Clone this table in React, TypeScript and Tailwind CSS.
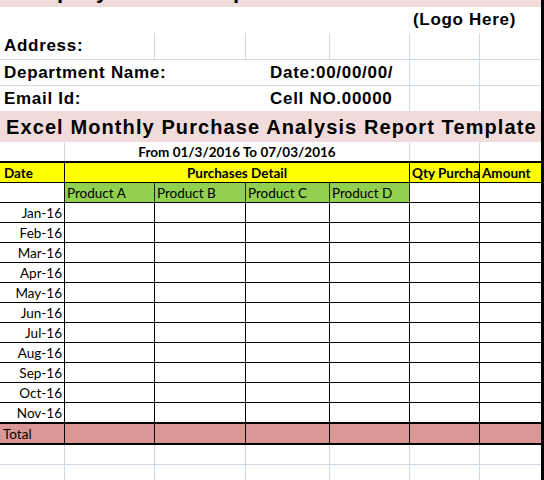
const months = ["Jan-16", "Feb-16", "Mar-16", "Apr-16", "May-16", "Jun-16", "Jul-16", "Aug-16", "Sep-16", "Oct-16", "Nov-16"];

// column widths incl. right gridline
const cols = ["w-[65px]", "w-[90px]", "w-[91px]", "w-[84px]", "w-[80px]", "w-[70px]", "w-[61px]"];

const arial = { fontFamily: '"Liberation Sans", Arial, sans-serif' };
const calibri = { fontFamily: 'Lato, "Noto Sans", sans-serif' };

interface IRowProps {
    cls: string;
    line: string;
    first?: React.ReactNode;
}

const PlainRow: React.FunctionComponent<IRowProps> = ({ cls, line, first }): JSX.Element => (
    <div className={`flex ${cls}`}>
        {cols.map((c, i) => (
            <div
                key={c}
                className={`${c} h-full flex items-center pt-[1px] ${i < cols.length - 1 ? `border-r ${line}` : ""} ${i === 0 ? "justify-end pr-[2px]" : ""}`}
            >
                {i === 0 ? first : null}
            </div>
        ))}
    </div>
);

const App: React.FunctionComponent = (): JSX.Element => {
    return (
        <div className="w-[544px] h-[480px] overflow-hidden bg-white flex text-black">
            <div className="w-[541px] flex flex-col">
                {/* company name row, scrolled mostly out of view */}
                <div className="h-[7px] shrink-0 bg-[#f2dcdb] overflow-hidden">
                    <div
                        className="mt-[-22px] pl-[8px] text-[22px] leading-[26px] font-bold whitespace-nowrap"
                        style={arial}
                    >
                        Company Name Group
                    </div>
                </div>

                <div className="h-[26px] shrink-0 flex items-center" style={arial}>
                    <div className="w-[410px]" />
                    <div className="pl-[3px] text-[17px] font-bold tracking-[0.7px] whitespace-nowrap">(Logo Here)</div>
                </div>

                <div className="h-[27px] shrink-0 flex border-b border-[#d0d7e5]" style={arial}>
                    <div className="w-[155px] border-r border-[#d0d7e5] flex items-center pl-[4px] text-[17px] font-bold tracking-[0.7px]">
                        Address:
                    </div>
                    <div className="w-[91px] border-r border-[#d0d7e5]" />
                    <div className="w-[84px] border-r border-[#d0d7e5]" />
                    <div className="w-[80px] border-r border-[#d0d7e5]" />
                    <div className="w-[70px] border-r border-[#d0d7e5]" />
                    <div className="w-[61px]" />
                </div>

                <div className="h-[26px] shrink-0 flex border-b border-[#d0d7e5]" style={arial}>
                    <div className="w-[410px] border-r border-[#d0d7e5] flex items-center text-[17px] font-bold tracking-[0.7px] whitespace-nowrap">
                        <span className="w-[270px] pl-[4px]">Department Name:</span>
                        <span>Date:00/00/00/</span>
                    </div>
                    <div className="w-[70px] border-r border-[#d0d7e5]" />
                    <div className="w-[61px]" />
                </div>

                <div className="h-[25px] shrink-0 flex" style={arial}>
                    <div className="w-[410px] border-r border-[#d0d7e5] flex items-center text-[17px] font-bold tracking-[0.7px] whitespace-nowrap">
                        <span className="w-[270px] pl-[4px]">Email Id:</span>
                        <span>Cell NO.00000</span>
                    </div>
                    <div className="w-[70px] border-r border-[#d0d7e5]" />
                    <div className="w-[61px]" />
                </div>

                <div
                    className="h-[31px] shrink-0 bg-[#f2dcdb] flex items-center pl-[6px] text-[20px] font-bold tracking-[1.1px] whitespace-nowrap"
                    style={arial}
                >
                    Excel Monthly Purchase Analysis Report Template
                </div>

                <div className="h-[21px] shrink-0 flex border-b-2 border-black text-[13.5px]" style={calibri}>
                    <div className="w-[65px] border-r border-[#d0d7e5]" />
                    <div className="w-[345px] border-r border-[#d0d7e5] flex items-center justify-center pt-[1px] font-bold whitespace-nowrap">
                        From 01/3/2016 To 07/03/2016
                    </div>
                    <div className="w-[70px] border-r border-[#d0d7e5]" />
                    <div className="w-[61px]" />
                </div>

                <div className="h-[20px] shrink-0 flex bg-[#ffff00] border-b border-black text-[13.5px] font-bold" style={calibri}>
                    <div className="w-[65px] border-r border-black flex items-center pt-[1px] pl-[4px]">Date</div>
                    <div className="w-[345px] border-r border-black flex items-center justify-center pt-[1px]">Purchases Detail</div>
                    <div className="w-[70px] border-r border-black flex items-center pt-[1px] pl-[2px] overflow-hidden whitespace-nowrap">
                        Qty Purcha
                    </div>
                    <div className="w-[61px] flex items-center pt-[1px] pl-[2px]">Amount</div>
                </div>

                <div className="h-[20px] shrink-0 flex border-b border-black text-[13.5px]" style={calibri}>
                    <div className="w-[65px] border-r border-black" />
                    {["Product A", "Product B", "Product C", "Product D"].map((p, i) => (
                        <div
                            key={p}
                            className={`${cols[i + 1]} bg-[#92d050] border-r border-[#1e2a10] flex items-center pt-[1px] pl-[2px] whitespace-nowrap`}
                        >
                            {p}
                        </div>
                    ))}
                    <div className="w-[70px] border-r border-black" />
                    <div className="w-[61px]" />
                </div>

                <div className="text-[13.5px]" style={calibri}>
                    {months.map((m) => (
                        <PlainRow key={m} cls="h-[20px] border-b border-black" line="border-black" first={m} />
                    ))}
                </div>

                <div className="h-[22px] shrink-0 flex bg-[#da9694] border-t border-b-2 border-black text-[13.5px]" style={calibri}>
                    {cols.map((c, i) => (
                        <div
                            key={c}
                            className={`${c} h-full flex items-center pt-[1px] pl-[3px] ${i < cols.length - 1 ? "border-r border-black" : ""}`}
                        >
                            {i === 0 ? "Total" : null}
                        </div>
                    ))}
                </div>

                <PlainRow cls="h-[20px] shrink-0 border-b border-[#d0d7e5]" line="border-[#d0d7e5]" />
                <PlainRow cls="h-[20px] shrink-0 border-b border-[#d0d7e5]" line="border-[#d0d7e5]" />
            </div>
            <div className="w-[3px] bg-black" />
        </div>
    );
};

export default App;
